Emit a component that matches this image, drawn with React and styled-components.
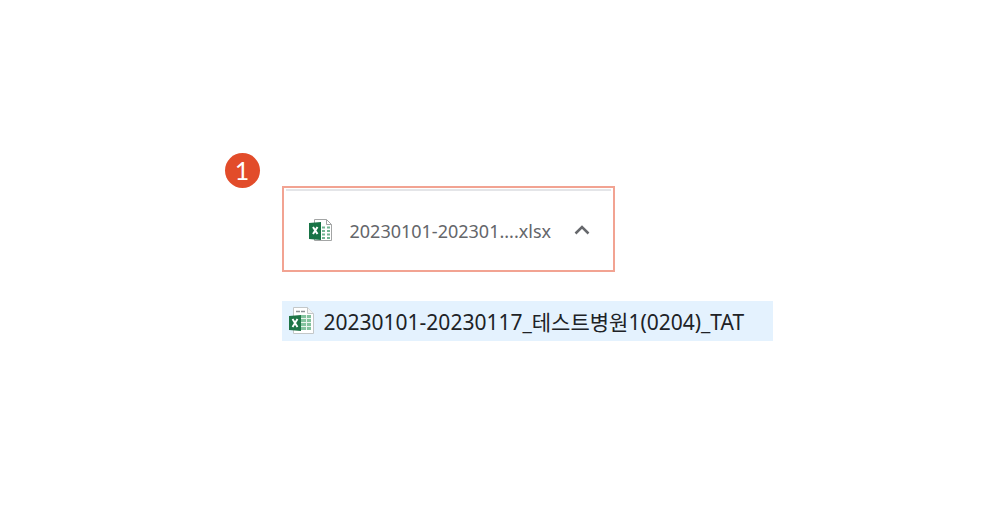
import React from "react";
import styled, { createGlobalStyle } from "styled-components";

const GlobalStyle = createGlobalStyle`
  * { box-sizing: border-box; }
  body {
    margin: 0;
    background: #ffffff;
    font-family: "Noto Sans", "Noto Sans CJK KR", sans-serif;
  }
`;

const Page = styled.main`
  display: flex;
  justify-content: center;
  padding: 153px 24px;
`;

const Step = styled.section`
  display: grid;
  grid-template-columns: 35px minmax(0, 1fr);
  column-gap: 22px;
  width: 100%;
  max-width: 552px;
`;

const StepNumber = styled.span`
  display: flex;
  align-items: center;
  justify-content: center;
  height: 35px;
  border-radius: 50%;
  background: #e24c2a;
  color: #ffffff;
  font-family: Lato, sans-serif;
  font-size: 25px;
  line-height: 35px;
`;

const Files = styled.div`
  display: flex;
  flex-direction: column;
  gap: 29px;
  padding-top: 33px;
`;

const DownloadBar = styled.div`
  width: 100%;
  max-width: 333px;
  height: 86px;
  padding: 1px 2px 2px;
  border: 2px solid #f2a392;
`;

const DownloadItem = styled.div`
  display: flex;
  align-items: center;
  height: 100%;
  padding: 0 17px 0 23px;
  border-top: 2px solid #e4e5e8;
`;

const DownloadName = styled.span`
  flex: 1;
  margin-left: 17px;
  padding-top: 2px;
  color: #64666a;
  font-size: 18px;
  line-height: 24px;
  white-space: nowrap;
`;

const MenuButton = styled.button`
  display: flex;
  align-items: center;
  justify-content: center;
  width: 24px;
  height: 24px;
  padding: 0;
  border: 0;
  background: transparent;
`;

const FileRow = styled.div`
  display: flex;
  align-items: center;
  gap: 9px;
  width: 100%;
  max-width: 491px;
  height: 40px;
  padding: 0 7px;
  background: #e4f2fe;
`;

const FileName = styled.span`
  padding-top: 2px;
  color: #202226;
  font-size: 21px;
  line-height: 28px;
  white-space: nowrap;
`;

function SmallSheetIcon() {
  return (
    <svg width="24" height="24" viewBox="0 0 24 24" aria-hidden="true">
      <path d="M5.5 1.5H17.5L22.5 6.5V22.5H5.5Z" fill="#fff" stroke="#a3a5a5" />
      <path d="M17.5 1.5V6.5H22.5" fill="none" stroke="#a3a5a5" />
      <path d="M13 9.500h8M13 13h8M13 16.500h8M13 20h8" stroke="#72b592" strokeWidth="2" strokeDasharray="3 2" />
      <path d="M0 5L12 4V22L0 21Z" fill="#187345" />
      <path d="M4 9L8.500 16M8.500 9L4 16" stroke="#fff" strokeWidth="2" />
    </svg>
  );
}

function SheetIcon() {
  return (
    <svg width="26" height="30" viewBox="0 0 26 30" aria-hidden="true">
      <path d="M4.500 1.500H18.500L24.500 7.500V27.500H4.500Z" fill="#fff" stroke="#c3c7c8" />
      <path d="M18.500 1.500V7.500H24.500" fill="#f4f5f5" stroke="#c3c7c8" />
      <path d="M7 5.500h4M12 5.500h4" stroke="#8c9295" strokeWidth="1.500" />
      <path d="M12 9h10v15H12z" fill="#83c39e" />
      <path d="M12 12.500h10M12 16.500h10M12 20.500h10M17.500 9v15" stroke="#e8f5ed" />
      <path d="M0 10L12 9V25L0 24Z" fill="#1e7547" />
      <path d="M3.500 13L8.500 21M8.500 13L3.500 21" stroke="#fff" strokeWidth="1.900" />
    </svg>
  );
}

function ChevronUp() {
  return (
    <svg width="16" height="10" viewBox="0 0 16 10" aria-hidden="true">
      <path d="M1.500 8.500L8 2L14.500 8.500" fill="none" stroke="#66686c" strokeWidth="2.500" />
    </svg>
  );
}

export default function App() {
  return (
    <>
      <GlobalStyle />
      <Page>
        <Step>
          <StepNumber>1</StepNumber>
          <Files>
            <DownloadBar>
              <DownloadItem>
                <SmallSheetIcon />
                <DownloadName>20230101-202301....xlsx</DownloadName>
                <MenuButton type="button" aria-label="다운로드 메뉴">
                  <ChevronUp />
                </MenuButton>
              </DownloadItem>
            </DownloadBar>
            <FileRow>
              <SheetIcon />
              <FileName>20230101-20230117_테스트병원1(0204)_TAT</FileName>
            </FileRow>
          </Files>
        </Step>
      </Page>
    </>
  );
}
